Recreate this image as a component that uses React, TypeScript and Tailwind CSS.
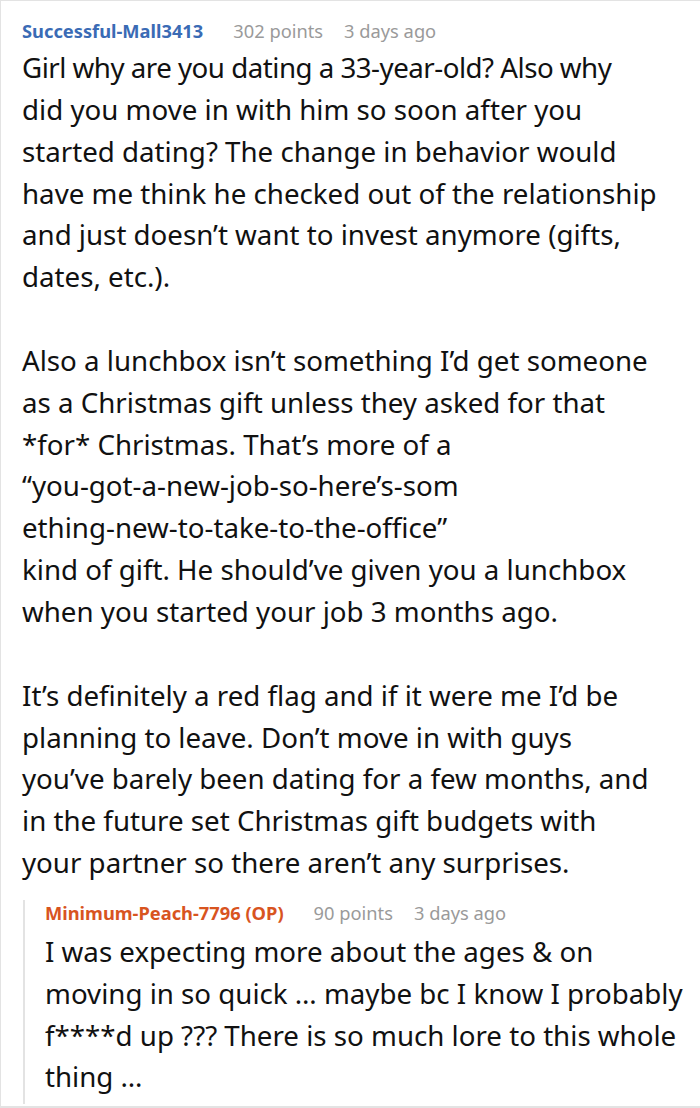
import React from "react";

const main1 = [
  "Girl why are you dating a 33-year-old? Also why",
  "did you move in with him so soon after you",
  "started dating? The change in behavior would",
  "have me think he checked out of the relationship",
  "and just doesn’t want to invest anymore (gifts,",
  "dates, etc.).",
];
const main2 = [
  "Also a lunchbox isn’t something I’d get someone",
  "as a Christmas gift unless they asked for that",
  "*for* Christmas. That’s more of a",
  "“you-got-a-new-job-so-here’s-som",
  "ething-new-to-take-to-the-office”",
  "kind of gift. He should’ve given you a lunchbox",
  "when you started your job 3 months ago.",
];
const main3 = [
  "It’s definitely a red flag and if it were me I’d be",
  "planning to leave. Don’t move in with guys",
  "you’ve barely been dating for a few months, and",
  "in the future set Christmas gift budgets with",
  "your partner so there aren’t any surprises.",
];
const reply = [
  "I was expecting more about the ages & on",
  "moving in so quick … maybe bc I know I probably",
  "f****d up ??? There is so much lore to this whole",
  "thing …",
];

function Lines({ lines, tightFirst }: { lines: string[]; tightFirst?: boolean }) {
  return (
    <div>
      {lines.map((l, i) => (
        <div
          key={i}
          className={
            tightFirst && i === 0
              ? "whitespace-nowrap tracking-[-0.5px]"
              : "whitespace-nowrap"
          }
        >
          {l}
        </div>
      ))}
    </div>
  );
}

export default function App() {
  return (
    <div
      className="w-[700px] h-[1108px] bg-white border-l border-t border-b-2 border-[#e3e3e3] text-[#111111] overflow-hidden"
      style={{ fontFamily: '"Noto Sans", sans-serif' }}
    >
      <div className="pl-[21px] pt-[17px]">
        <div className="flex items-center h-[26px] text-[18.3px] leading-[26px]">
          <span className="font-bold text-[#3a6bb5]">Successful-Mall3413</span>
          <span className="ml-[30px] text-[#9a9a9a]">302 points</span>
          <span className="ml-[21px] text-[#9a9a9a]">3 days ago</span>
        </div>
        <div className="mt-[3px] text-[27.7px] leading-[41.85px]">
          <Lines lines={main1} tightFirst />
          <div className="h-[41.85px]" />
          <Lines lines={main2} />
          <div className="h-[41.85px]" />
          <Lines lines={main3} />
        </div>
        <div className="mt-[16px] ml-[1px] border-l-2 border-[#e3e3e3] pl-[20px] pb-[6px]">
          <div className="flex items-center h-[26px] text-[18.3px] leading-[26px]">
            <span className="font-bold text-[#d8541f]">Minimum-Peach-7796 (OP)</span>
            <span className="ml-[30px] text-[#9a9a9a]">90 points</span>
            <span className="ml-[21px] text-[#9a9a9a]">3 days ago</span>
          </div>
          <div className="mt-[5px] text-[27.7px] leading-[41.85px]">
            <Lines lines={reply} />
          </div>
        </div>
      </div>
    </div>
  );
}
